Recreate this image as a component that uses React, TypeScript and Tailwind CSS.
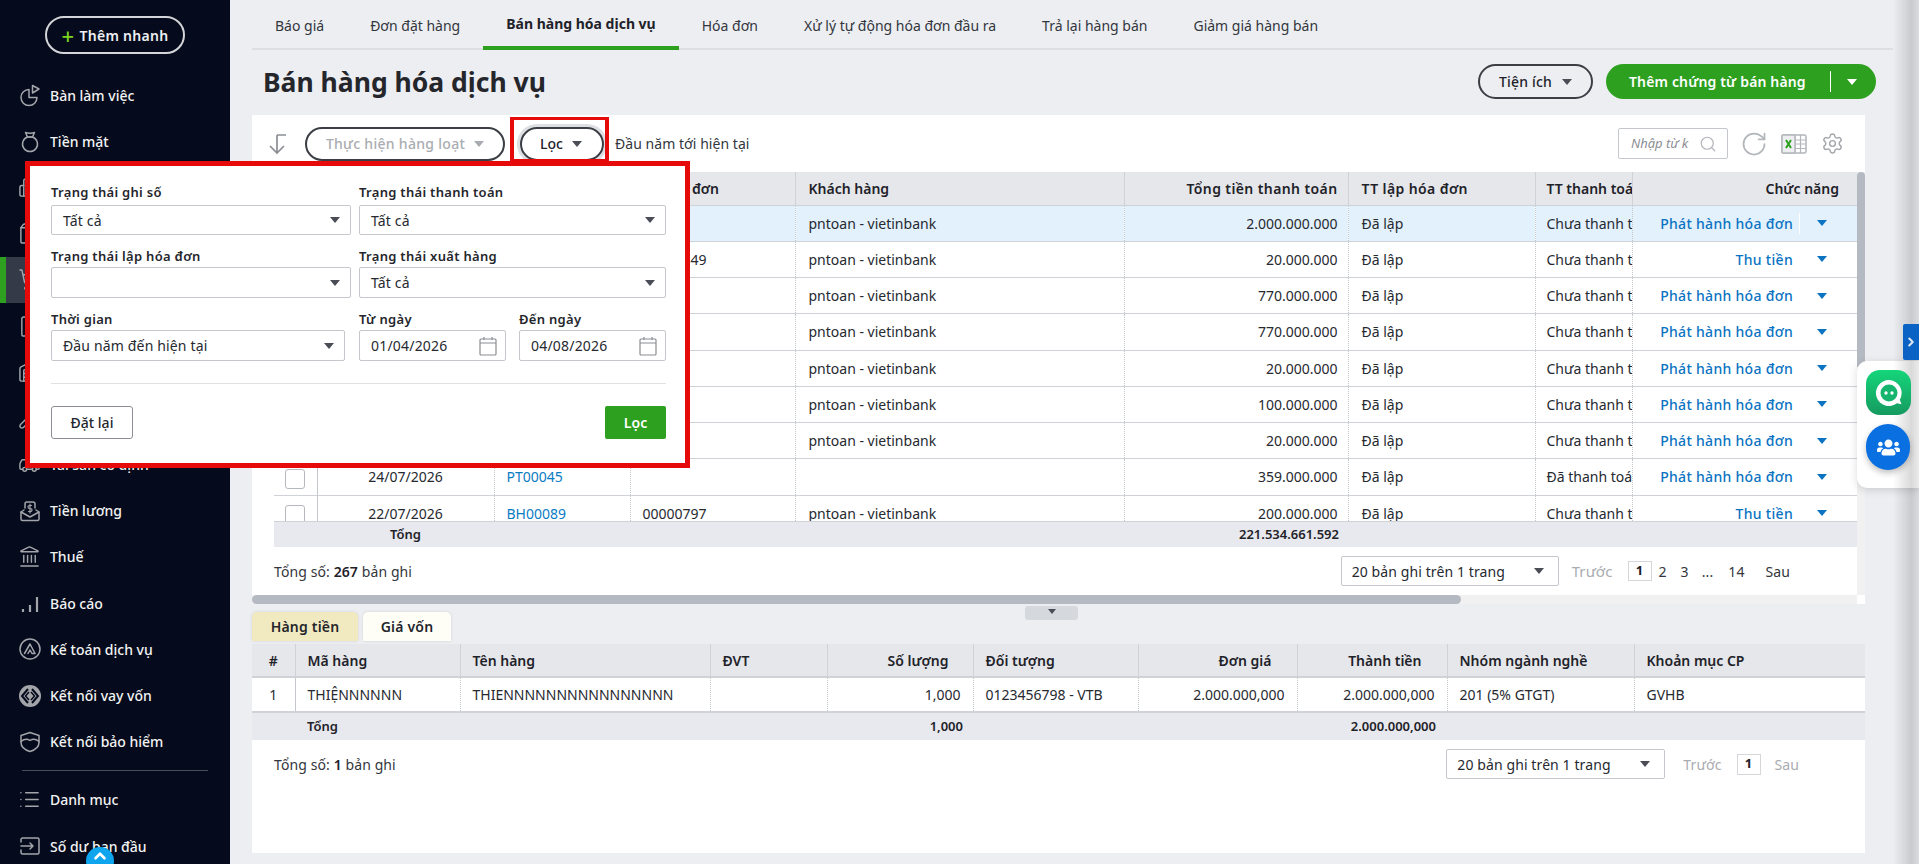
import type { ReactNode } from 'react'
import {
  Building2,
  Car,
  ChevronRight,
  ChevronUp,
  FileText,
  Landmark,
  List,
  RotateCw,
  Search,
  Settings,
  ShoppingBag,
  ShoppingCart,
  Warehouse,
  Wrench,
} from 'lucide-react'
import { FaUsers } from 'react-icons/fa'

function Caret({ className = 'text-[#4a4d55]', w = 10, h = 6 }: { className?: string; w?: number; h?: number }) {
  return (
    <svg width={w} height={h} viewBox="0 0 10 6" className={`shrink-0 ${className}`}>
      <polygon points="0,0 10,0 5,6" fill="currentColor" />
    </svg>
  )
}

function Glyph({ children }: { children: ReactNode }) {
  return (
    <svg width="24" height="24" viewBox="0 0 24 24" fill="none" stroke="currentColor" strokeWidth="1.5" strokeLinejoin="round" strokeLinecap="round">
      {children}
    </svg>
  )
}

const lucideProps = { size: 23, strokeWidth: 1.5 }

const topItems: { label: string; icon: ReactNode; active?: boolean }[] = [
  {
    label: 'Bàn làm việc',
    icon: (
      <Glyph>
        <path d="M11 6.5a8 8 0 1 0 8 8h-8z" />
        <path d="M14.5 2.5l6.5 3.5-6.5 4z" />
      </Glyph>
    ),
  },
  {
    label: 'Tiền mặt',
    icon: (
      <Glyph>
        <path d="M7.5 3.5c2 1 7 1 9 0l-2 4.5h-5z" />
        <path d="M9.5 8a7.5 7.5 0 1 0 5 0z" />
      </Glyph>
    ),
  },
  { label: 'Tiền gửi', icon: <Building2 {...lucideProps} /> },
  { label: 'Mua hàng', icon: <ShoppingBag {...lucideProps} /> },
  { label: 'Bán hàng', icon: <ShoppingCart {...lucideProps} />, active: true },
  { label: 'Hóa đơn', icon: <FileText {...lucideProps} /> },
  { label: 'Kho', icon: <Warehouse {...lucideProps} /> },
  { label: 'Công cụ dụng cụ', icon: <Wrench {...lucideProps} /> },
  { label: 'Tài sản cố định', icon: <Car {...lucideProps} /> },
  {
    label: 'Tiền lương',
    icon: (
      <Glyph>
        <path d="M7 9V5a2 2 0 0 1 2-2h6a2 2 0 0 1 2 2v4" />
        <path d="M6 11l-3 2v7a1.5 1.5 0 0 0 1.5 1.5h15A1.5 1.5 0 0 0 21 20v-7l-3-2" />
        <path d="M3 13l9 5 9-5" />
        <path d="M13.5 6.5h-2a1 1 0 0 0 0 3h1a1 1 0 0 1 0 3h-2M12 5v9" strokeWidth="1.2" />
      </Glyph>
    ),
  },
  { label: 'Thuế', icon: <Landmark {...lucideProps} /> },
  {
    label: 'Báo cáo',
    icon: (
      <Glyph>
        <path d="M5 21v-3M12 21v-7M19 21V6" strokeWidth="2.2" strokeLinecap="butt" />
      </Glyph>
    ),
  },
  {
    label: 'Kế toán dịch vụ',
    icon: (
      <Glyph>
        <circle cx="12" cy="12" r="10" />
        <path d="M6.5 16.5L12 7l5 9.5h-3l-2-3.5-2 3.5" />
      </Glyph>
    ),
  },
  {
    label: 'Kết nối vay vốn',
    icon: (
      <svg width="24" height="24" viewBox="0 0 24 24">
        <circle cx="12" cy="12" r="11" fill="currentColor" />
        <path d="M10 5l-6 7 6 7M14 5l6 7-6 7" fill="none" stroke="#050b1c" strokeWidth="2" />
        <path d="M11 8l-3.5 4 3.5 4M13 8l3.5 4-3.5 4" fill="none" stroke="#050b1c" strokeWidth="1.5" />
      </svg>
    ),
  },
  {
    label: 'Kết nối bảo hiểm',
    icon: (
      <Glyph>
        <path d="M12 2.5l9 3v7c0 4.5-4 7.500-9 9-5-1.500-9-4.500-9-9v-7z" />
        <path d="M3 11.500c3-2.500 6-3 9-1 3-2 6-1.500 9 1" />
      </Glyph>
    ),
  },
]

const bottomItems: { label: string; icon: ReactNode }[] = [
  { label: 'Danh mục', icon: <List {...lucideProps} /> },
  {
    label: 'Số dư ban đầu',
    icon: (
      <Glyph>
        <path d="M3 8V5.500A1.500 1.500 0 0 1 4.500 4h15A1.500 1.500 0 0 1 21 5.500v13a1.500 1.500 0 0 1-1.500 1.500h-15A1.500 1.500 0 0 1 3 18.500V16" />
        <path d="M3 12h12M12 9l3 3-3 3" />
      </Glyph>
    ),
  },
]

function NavItem({ label, icon, active }: { label: string; icon: ReactNode; active?: boolean }) {
  return (
    <div className={`relative flex h-[46.2px] items-center pl-[18px] ${active ? 'bg-[#353a48]' : ''}`}>
      {active && <span className="absolute inset-y-0 left-0 w-[6px] bg-[#2ea01f]" />}
      <span className="flex w-[32px] shrink-0 text-[#a3a5aa]">{icon}</span>
      <span className="text-[14px] font-medium whitespace-nowrap text-[#f3f3f3]">{label}</span>
    </div>
  )
}

function Sidebar() {
  return (
    <aside className="relative h-full w-[230px] shrink-0 bg-[#050b1c]">
      <div className="flex justify-center pt-[16px]">
        <button className="flex h-[38px] w-[140px] items-center justify-center gap-[5px] rounded-full border-2 border-[#d4d5d8] text-[14px] font-semibold tracking-[0.3px] text-[#eef0f3]">
          <span className="text-[22px] leading-none font-medium text-[#7ed321]">+</span>
          Thêm nhanh
        </button>
      </div>
      <nav className="mt-[18px]">
        {topItems.map((item) => (
          <NavItem key={item.label} {...item} />
        ))}
      </nav>
      <div className="mx-[22px] mt-[5px] mb-[6px] h-px bg-[#4b4e58]" />
      {bottomItems.map((item) => (
        <NavItem key={item.label} {...item} />
      ))}
      <span className="absolute top-[847px] left-[86px] flex h-[28px] w-[28px] justify-center rounded-full bg-[#0ea5ee] text-white">
        <ChevronUp size={18} strokeWidth={3.5} />
      </span>
    </aside>
  )
}

const tabs = ['Báo giá', 'Đơn đặt hàng', 'Bán hàng hóa dịch vụ', 'Hóa đơn', 'Xử lý tự động hóa đơn đầu ra', 'Trả lại hàng bán', 'Giảm giá hàng bán']

function Tabs() {
  return (
    <div className="flex h-[50px] w-[1641px] border-b-2 border-[#dcdee2]">
      {tabs.map((t, i) => (
        <div
          key={t}
          className={`flex h-[50px] items-center px-[23px] pt-[1px] text-[14px] whitespace-nowrap ${
            i === 2 ? 'border-b-4 border-[#2ea01f] font-bold text-[#1f2229]' : 'text-[#33363d]'
          }`}
        >
          {t}
        </div>
      ))}
    </div>
  )
}

function PageHead() {
  return (
    <div className="flex h-[65px] w-[1624px] items-center justify-between pl-[11px]">
      <h1 className="text-[26.5px] font-bold text-[#24262c]">Bán hàng hóa dịch vụ</h1>
      <div className="mb-[2px] flex items-center gap-[13px]">
        <button className="flex h-[35px] w-[115px] items-center justify-center gap-[10px] rounded-full border-2 border-[#3b3e45] text-[14px] font-medium tracking-[0.2px] text-[#1f2229]">
          Tiện ích
          <Caret />
        </button>
        <button className="flex h-[35px] w-[270px] items-center rounded-full bg-[#2ea01f] pl-[23px] text-[14px] font-semibold tracking-[0.15px] text-white">
          Thêm chứng từ bán hàng
          <span className="ml-[24px] h-[21px] w-px bg-white" />
          <span className="ml-[16px]">
            <Caret className="text-white" />
          </span>
        </button>
      </div>
    </div>
  )
}

function Toolbar() {
  return (
    <div className="flex h-[57px] items-center pr-[21px] pl-[15px]">
      <svg width="22" height="22" viewBox="0 0 22 22" fill="none" stroke="#8b8e94" strokeWidth="1.700">
        <path d="M10 2v18M3 13l7 7 7-7M10 2h9" />
      </svg>
      <button className="ml-[16px] flex h-[34px] w-[200px] items-center justify-center gap-[9px] rounded-full border-2 border-[#3b3e45] text-[14px] font-medium tracking-[0.3px] text-[#a9acb0]">
        Thực hiện hàng loạt
        <Caret className="text-[#a9acb0]" />
      </button>
      <button className="ml-[15px] flex h-[34px] w-[84px] items-center justify-center gap-[9px] rounded-full border-2 border-[#3b3e45] pr-[2px] text-[14px] font-medium text-[#1f2229] ring-[3px] ring-[#dedfe2]">
        Lọc
        <Caret />
      </button>
      <span className="ml-[11px] text-[14px] tracking-[0.05px] text-[#33363d]">Đầu năm tới hiện tại</span>
      <div className="ml-auto flex h-[31px] w-[110px] items-center rounded-[2px] border border-[#c4c7cc] pr-[10px] pl-[12px]">
        <span className="flex-1 overflow-hidden text-[13px] whitespace-nowrap text-[#8b8e94] italic">Nhập từ k</span>
        <Search size={18} strokeWidth={1.6} className="shrink-0 text-[#b3b6bb]" />
      </div>
      <RotateCw size={28} strokeWidth={1.5} className="ml-[12px] text-[#b3b6bb]" />
      <svg width="26" height="22" viewBox="0 0 26 22" className="ml-[13px]">
        <rect x="1" y="2" width="24" height="18" rx="1.500" fill="none" stroke="#b3b6bb" strokeWidth="1.500" />
        <path d="M14 2v18M19.500 2v18M14 7h11M14 11h11M14 15.500h11" stroke="#b3b6bb" strokeWidth="1.200" />
        <rect x="1" y="2" width="13" height="18" rx="1" fill="#eceef0" stroke="#b3b6bb" strokeWidth="1.500" />
        <path d="M5 7l5 8M10 7l-5 8" stroke="#2ea01f" strokeWidth="2" />
      </svg>
      <Settings size={23} strokeWidth={1.5} className="ml-[14px] text-[#a3a6ab]" />
    </div>
  )
}

const cellBase = 'overflow-hidden border-r border-dotted border-[#c4c7cc] text-[14px] whitespace-nowrap'
const cell = `${cellBase} text-[#262930]`
const headCell = 'overflow-hidden border-r border-[#cfd2d6] text-[14px] font-semibold whitespace-nowrap text-[#1f2229]'

const saleRows = [
  { date: '31/07/2026', code: 'BH00097', inv: '', customer: 'pntoan - vietinbank', total: '2.000.000.000', pay: 'Chưa thanh toán', action: 'Phát hành hóa đơn' },
  { date: '30/07/2026', code: 'BH00096', inv: '00000849', customer: 'pntoan - vietinbank', total: '20.000.000', pay: 'Chưa thanh toán', action: 'Thu tiền' },
  { date: '29/07/2026', code: 'BH00095', inv: '', customer: 'pntoan - vietinbank', total: '770.000.000', pay: 'Chưa thanh toán', action: 'Phát hành hóa đơn' },
  { date: '29/07/2026', code: 'BH00094', inv: '', customer: 'pntoan - vietinbank', total: '770.000.000', pay: 'Chưa thanh toán', action: 'Phát hành hóa đơn' },
  { date: '28/07/2026', code: 'BH00093', inv: '', customer: 'pntoan - vietinbank', total: '20.000.000', pay: 'Chưa thanh toán', action: 'Phát hành hóa đơn' },
  { date: '27/07/2026', code: 'BH00092', inv: '', customer: 'pntoan - vietinbank', total: '100.000.000', pay: 'Chưa thanh toán', action: 'Phát hành hóa đơn' },
  { date: '25/07/2026', code: 'BH00090', inv: '', customer: 'pntoan - vietinbank', total: '20.000.000', pay: 'Chưa thanh toán', action: 'Phát hành hóa đơn' },
  { date: '24/07/2026', code: 'PT00045', inv: '', customer: '', total: '359.000.000', pay: 'Đã thanh toán', action: 'Phát hành hóa đơn' },
  { date: '22/07/2026', code: 'BH00089', inv: '00000797', customer: 'pntoan - vietinbank', total: '200.000.000', pay: 'Chưa thanh toán', action: 'Thu tiền' },
]

const saleCols = [43, 177, 136, 165, 329, 224, 187, 97, 225]

function Cols({ widths }: { widths: number[] }) {
  return (
    <colgroup>
      {widths.map((w, i) => (
        <col key={i} style={{ width: w }} />
      ))}
    </colgroup>
  )
}

function SalesTable() {
  return (
    <div className="ml-[22px]">
      <div className="h-[349px] overflow-hidden">
        <table className="w-[1583px] table-fixed border-collapse">
          <Cols widths={saleCols} />
          <thead>
            <tr className="h-[33px] border-b border-[#cfd2d6] bg-[#e5e7eb]">
              <th className={headCell} />
              <th className={`${headCell} text-center`}>Ngày hạch toán</th>
              <th className={`${headCell} pl-[12px] text-left`}>Số chứng từ</th>
              <th className={`${headCell} pl-[12px] text-left`}>Số hóa đơn</th>
              <th className={`${headCell} pl-[13px] text-left`}>Khách hàng</th>
              <th className={`${headCell} pr-[10px] text-right tracking-[0.4px]`}>Tổng tiền thanh toán</th>
              <th className={`${headCell} pl-[13px] text-left tracking-[0.4px]`}>TT lập hóa đơn</th>
              <th className={`${headCell} pl-[11px] text-left`}>TT thanh toán</th>
              <th className="pr-[18px] text-right text-[14px] font-semibold text-[#1f2229]">Chức năng</th>
            </tr>
          </thead>
          <tbody>
            {saleRows.map((r, i) => (
              <tr key={r.code} className={`h-[36.250px] border-b border-[#cfd2d6] ${i === 0 ? 'bg-[#e3f1fc]' : ''}`}>
                <td className="border-r border-[#c4c7cc] text-center">
                  <span className="inline-block h-[20px] w-[20px] rounded-[3px] border border-[#b5b8bd] bg-white align-middle" />
                </td>
                <td className={`${cell} text-center`}>{r.date}</td>
                <td className={`${cellBase} pl-[12px] text-[#0a7cc4]`}>{r.code}</td>
                <td className={`${cell} pl-[12px]`}>{r.inv}</td>
                <td className={`${cell} pl-[13px]`}>{r.customer}</td>
                <td className={`${cell} pr-[10px] text-right`}>{r.total}</td>
                <td className={`${cell} pl-[13px]`}>Đã lập</td>
                <td className={`${cell} pl-[11px]`}>{r.pay}</td>
                <td>
                  <div className="flex items-center justify-end pr-[30px]">
                    <span className="text-[14px] font-medium tracking-[0.3px] text-[#0a73c2]">{r.action}</span>
                    <span className={`ml-[6px] h-[21px] w-px ${i === 0 ? 'bg-white' : ''}`} />
                    <span className="ml-[17px]">
                      <Caret className="text-[#0a73c2]" />
                    </span>
                  </div>
                </td>
              </tr>
            ))}
          </tbody>
        </table>
      </div>
      <div className="flex h-[26px] w-[1583px] items-center border-t border-[#cfd2d6] bg-[#e7e9ee] text-[13px] font-semibold text-[#1f2229]">
        <span className="w-[220px] pl-[43px] text-center">Tổng</span>
        <span className="w-[845px] text-right">221.534.661.592</span>
      </div>
    </div>
  )
}

function PageSelect({ width }: { width: string }) {
  return (
    <div className={`flex h-[30px] items-center justify-between rounded-[2px] border border-[#c4c7cc] pr-[14px] pl-[10px] text-[14px] text-[#262930] ${width}`}>
      20 bản ghi trên 1 trang
      <Caret />
    </div>
  )
}

function SalesPager() {
  return (
    <div className="flex h-[48px] items-center pr-[67px] pl-[22px] text-[14px] tracking-[0.1px] text-[#33363d]">
      <span>
        Tổng số: <b className="font-semibold text-[#1f2229]">267</b> bản ghi
      </span>
      <div className="ml-auto flex items-center">
        <PageSelect width="w-[218px]" />
        <span className="ml-[13px] text-[15px] text-[#a9acb0]">Trước</span>
        <span className="ml-[15px] flex h-[20px] w-[24px] items-center justify-center border border-[#d4d6da] text-[13px] font-bold text-[#1f2229]">1</span>
        <span className="ml-[7px]">2</span>
        <span className="ml-[14px]">3</span>
        <span className="ml-[13px]">...</span>
        <span className="ml-[15px]">14</span>
        <span className="ml-[21px]">Sau</span>
      </div>
    </div>
  )
}

const detailCols = [43, 165, 250, 117, 146, 165, 159, 150, 187, 231]

function DetailTable() {
  const h = `${headCell} pl-[12px] text-left`
  const c = `${cell} pl-[12px]`
  return (
    <>
      <table className="w-[1613px] table-fixed border-collapse">
        <Cols widths={detailCols} />
        <thead>
          <tr className="h-[33px] border-b-2 border-[#cfd2d6] bg-[#e5e7eb]">
            <th className={`${headCell} text-center`}>#</th>
            <th className={h}>Mã hàng</th>
            <th className={h}>Tên hàng</th>
            <th className={h}>ĐVT</th>
            <th className={`${headCell} pr-[24px] text-right`}>Số lượng</th>
            <th className={h}>Đối tượng</th>
            <th className={`${headCell} pr-[25px] text-right`}>Đơn giá</th>
            <th className={`${headCell} pr-[25px] text-right`}>Thành tiền</th>
            <th className={h}>Nhóm ngành nghề</th>
            <th className="pl-[12px] text-left text-[14px] font-semibold text-[#1f2229]">Khoản mục CP</th>
          </tr>
        </thead>
        <tbody>
          <tr className="h-[35px]">
            <td className="border-r border-[#c4c7cc] text-center text-[14px] text-[#262930]">1</td>
            <td className={c}>THIỆNNNNNN</td>
            <td className={c}>THIENNNNNNNNNNNNNNNN</td>
            <td className={c} />
            <td className={`${cell} pr-[12px] text-right`}>1,000</td>
            <td className={c}>0123456798 - VTB</td>
            <td className={`${cell} pr-[12px] text-right`}>2.000.000,000</td>
            <td className={`${cell} pr-[12px] text-right`}>2.000.000,000</td>
            <td className={c}>201 (5% GTGT)</td>
            <td className="pl-[12px] text-[14px] text-[#262930]">GVHB</td>
          </tr>
          <tr className="h-[28px] border-t-2 border-[#cfd2d6] bg-[#e7e9ee] text-[13px] font-semibold text-[#1f2229]">
            <td />
            <td className="pl-[12px]">Tổng</td>
            <td />
            <td />
            <td className="pr-[10px] text-right">1,000</td>
            <td />
            <td />
            <td className="pr-[11px] text-right">2.000.000,000</td>
            <td />
            <td />
          </tr>
        </tbody>
      </table>
      <div className="flex h-[48px] items-center pr-[66px] pl-[22px] text-[14px] tracking-[0.1px] text-[#33363d]">
        <span>
          Tổng số: <b className="font-semibold text-[#1f2229]">1</b> bản ghi
        </span>
        <div className="ml-auto flex items-center">
          <PageSelect width="w-[219px]" />
          <span className="ml-[18px] text-[14px] text-[#a9acb0]">Trước</span>
          <span className="ml-[15px] flex h-[21px] w-[24px] items-center justify-center border border-[#d4d6da] text-[13px] font-bold text-[#1f2229]">1</span>
          <span className="ml-[14px] text-[#a9acb0]">Sau</span>
        </div>
      </div>
    </>
  )
}

function Field({ label, width, children, gap = 'mb-[1px]' }: { label: string; width: string; children: ReactNode; gap?: string }) {
  return (
    <div className={width}>
      <div className={`h-[20px] text-[13px] leading-[20px] font-semibold tracking-[0.3px] text-[#24262c] ${gap}`}>{label}</div>
      {children}
    </div>
  )
}

function SelectBox({ value, h = 'h-[31px]' }: { value?: string; h?: string }) {
  return (
    <div className={`flex items-center justify-between rounded-[2px] border border-[#c4c7cc] pr-[10px] pl-[11px] text-[14px] tracking-[0.15px] text-[#262930] ${h}`}>
      <span>{value}</span>
      <Caret />
    </div>
  )
}

function DateBox({ value }: { value: string }) {
  return (
    <div className="flex h-[31px] items-center justify-between rounded-[2px] border border-[#c4c7cc] pr-[7px] pl-[11px] text-[14px] tracking-[0.2px] text-[#262930]">
      <span>{value}</span>
      <svg width="20" height="20" viewBox="0 0 20 20" fill="none" stroke="#8b8e94" strokeWidth="1.200">
        <rect x="2" y="3" width="16" height="16" rx="1" />
        <path d="M2 7h16M6 1v3M14 1v3" />
      </svg>
    </div>
  )
}

function FilterPopup() {
  return (
    <div className="absolute top-[161px] left-[25px] z-40 h-[307px] w-[665px] border-[5px] border-[#e60a0a] bg-white pt-[16px] pr-[19px] pl-[21px]">
      <div className="flex gap-[8px]">
        <Field label="Trạng thái ghi số" width="w-[300px]" gap="mb-[3px]">
          <SelectBox value="Tất cả" h="h-[30px]" />
        </Field>
        <Field label="Trạng thái thanh toán" width="w-[307px]" gap="mb-[3px]">
          <SelectBox value="Tất cả" h="h-[30px]" />
        </Field>
      </div>
      <div className="mt-[11px] flex gap-[8px]">
        <Field label="Trạng thái lập hóa đơn" width="w-[300px]">
          <SelectBox />
        </Field>
        <Field label="Trạng thái xuất hàng" width="w-[307px]">
          <SelectBox value="Tất cả" />
        </Field>
      </div>
      <div className="mt-[11px] flex">
        <Field label="Thời gian" width="w-[294px]">
          <SelectBox value="Đầu năm đến hiện tại" />
        </Field>
        <Field label="Từ ngày" width="ml-[14px] w-[147px]">
          <DateBox value="01/04/2026" />
        </Field>
        <Field label="Đến ngày" width="ml-[13px] w-[147px]">
          <DateBox value="04/08/2026" />
        </Field>
      </div>
      <div className="mt-[22px] h-px bg-[#dfe1e4]" />
      <div className="mt-[22px] flex justify-between">
        <button className="h-[33px] w-[82px] rounded-[3px] border border-[#8b8e94] text-[14px] font-medium text-[#24262c]">Đặt lại</button>
        <button className="h-[33px] w-[61px] rounded-[2px] bg-[#2ea01f] text-[14px] font-semibold text-white">Lọc</button>
      </div>
    </div>
  )
}

function SideWidgets() {
  return (
    <>
      <div className="absolute top-[361px] right-0 z-10 h-[127px] w-[62px] rounded-l-[10px] bg-white shadow-[0_2px_8px_rgba(0,0,0,0.15)]" />
      <div className="pointer-events-none absolute inset-y-0 right-0 z-20 w-[26px] bg-linear-to-r from-transparent via-[#00000026] via-70% to-[#00000014]" />
      <span className="absolute top-[324px] right-0 z-30 flex h-[36px] w-[16px] items-center justify-center rounded-l-[2px] bg-[#0a62c4] text-[#dfe6f0]">
        <ChevronRight size={14} strokeWidth={3.5} />
      </span>
      <span className="absolute top-[370px] left-[1866px] z-30 flex h-[45px] w-[45px] items-center justify-center rounded-[14px] bg-linear-to-b from-[#14d67a] to-[#169a60]">
        <svg width="30" height="30" viewBox="0 0 30 30">
          <path d="M15 2a13 13 0 1 0 8 23.200l4.500 1-1.700-4.500A13 13 0 0 0 15 2z" fill="white" />
          <circle cx="15" cy="15" r="8.500" fill="#16b56d" />
          <circle cx="12" cy="15" r="1.700" fill="white" />
          <circle cx="18" cy="15" r="1.700" fill="white" />
        </svg>
      </span>
      <span className="absolute top-[424px] left-[1866px] z-30 flex h-[46px] w-[44px] items-center justify-center rounded-full bg-[#0a6fe0] text-white shadow-[0_3px_6px_rgba(0,0,0,0.25)]">
        <FaUsers size={23} />
      </span>
    </>
  )
}

export default function App() {
  return (
    <div className="relative flex h-[864px] w-[1919px] overflow-hidden bg-[#eceef2] font-['Noto_Sans',sans-serif]">
      <Sidebar />
      <main className="min-w-0 flex-1 pl-[22px]">
        <Tabs />
        <PageHead />
        <section className="w-[1613px] bg-white">
          <Toolbar />
          <div className="flex">
            <div className="w-[1605px]">
              <SalesTable />
              <SalesPager />
            </div>
            <div className="w-[8px] bg-[#f1f1f1]">
              <div className="h-[195px] rounded-t-[4px] bg-[#b5bac2]" />
            </div>
          </div>
          <div className="h-[9px] w-[1605px] bg-[#f1f1f1]">
            <div className="h-full w-[1209px] rounded-r-[5px] rounded-l-[5px] bg-[#b5bac2]" />
          </div>
        </section>
        <div className="relative flex h-[40px] w-[1613px] items-end gap-[5px]">
          <span className="absolute top-[2px] left-[773px] flex h-[14px] w-[53px] justify-center rounded-[3px] bg-[#d5d8dc] pt-[3px]">
            <Caret w={8} h={5} />
          </span>
          <span className="mb-[3px] flex h-[29px] w-[106px] items-center justify-center rounded-t-[5px] bg-[#f1e9c0] text-[14px] font-semibold tracking-[0.2px] text-[#24262c] shadow-[0_0_3px_rgba(0,0,0,0.12)]">Hàng tiền</span>
          <span className="mb-[3px] flex h-[29px] w-[88px] items-center justify-center rounded-t-[5px] bg-[#fffef6] text-[14px] font-semibold tracking-[0.2px] text-[#24262c] shadow-[0_0_3px_rgba(0,0,0,0.12)]">Giá vốn</span>
        </div>
        <section className="h-[209px] w-[1613px] bg-white">
          <DetailTable />
        </section>
      </main>
      <FilterPopup />
      <div className="absolute top-[117px] left-[510px] z-30 h-[46px] w-[99px] border-[4px] border-t-[3px] border-[#e60a0a]" />
      <SideWidgets />
    </div>
  )
}
